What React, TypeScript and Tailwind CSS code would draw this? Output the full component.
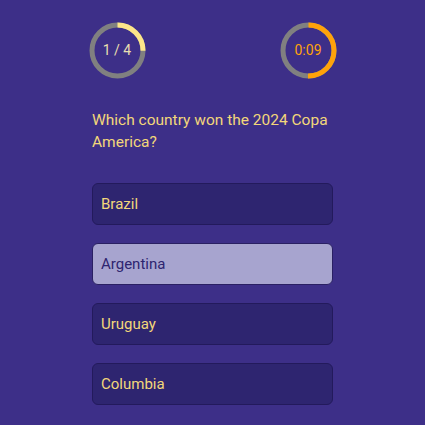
const options = ["Brazil", "Argentina", "Uruguay", "Columbia"];
const selected = 1;

const Ring = ({ progress, color, label, textClass }: { progress: number; color: string; label: string; textClass: string }) => {
  const r = 25.5;
  const c = 2 * Math.PI * r;
  return (
    <div className="relative w-[57px] h-[57px] flex items-center justify-center">
      <svg className="absolute inset-0 -rotate-90" width="57" height="57" viewBox="0 0 57 57">
        <circle cx="28.5" cy="28.5" r={r} fill="none" stroke="#808080" strokeWidth="5" />
        <circle
          cx="28.5"
          cy="28.5"
          r={r}
          fill="none"
          stroke={color}
          strokeWidth="5"
          strokeDasharray={`${c * progress} ${c}`}
        />
      </svg>
      <span className={`relative text-[14px] ${textClass}`}>{label}</span>
    </div>
  );
};

export default function App() {
  return (
    <div className="w-[425px] h-[425px] bg-[#3d2f88] font-['Roboto','Noto_Sans',sans-serif] overflow-hidden">
      <div className="w-[248px] mx-auto pt-[22px] flex justify-between">
        <Ring progress={0.25} color="#fde68a" label="1 / 4" textClass="text-[#e9dfb0]" />
        <Ring progress={0.5} color="#ffa20a" label="0:09" textClass="text-[#ffa20a]" />
      </div>

      <div className="w-[241px] mx-auto">
        <p className="mt-[30px] text-[15.5px] leading-[22px] text-[#f3d77a]">
          Which country won the 2024 Copa America?
        </p>

        <div className="mt-[30px] flex flex-col gap-[18px]">
          {options.map((o, i) => (
            <div
              key={o}
              className={
                i === selected
                  ? "h-[42px] rounded-md border border-[#2a2063] bg-[#a7a4cf] px-2 flex items-center text-[15px] text-[#2e2570]"
                  : "h-[42px] rounded-md border border-[#231a5c] bg-[#2e2570] px-2 flex items-center text-[15px] text-[#f3d77a]"
              }
            >
              {o}
            </div>
          ))}
        </div>
      </div>
    </div>
  );
}
